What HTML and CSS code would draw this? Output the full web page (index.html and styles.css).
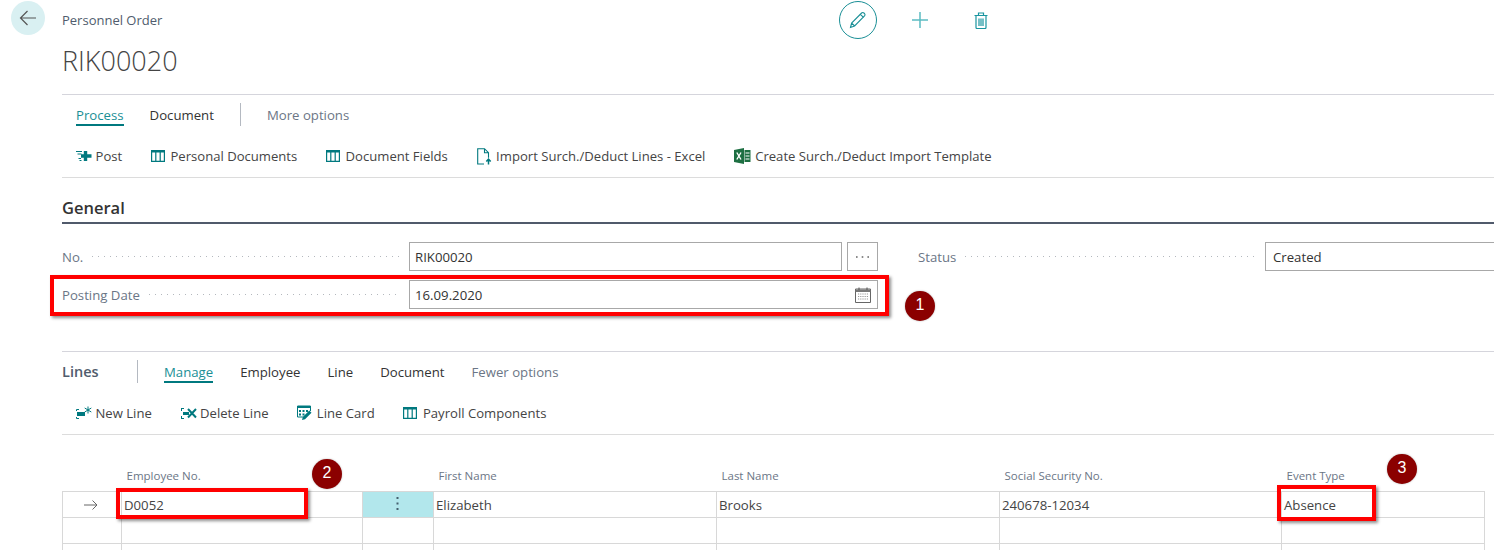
FILE: index.html
```html
<!DOCTYPE html>
<html lang="en">
<head>
    <meta charset="UTF-8">
    <title>Personnel Order</title>
    <link rel="stylesheet" href="styles.css">
</head>
<body>
    <div class="page">
        <!-- Back button -->
        <div class="back-col">
            <button class="back-btn">
                <svg width="18" height="16" viewBox="0 0 18 16"><path d="M17 8H1.500M8.500 1 1.500 8l7 7" fill="none" stroke="#555" stroke-width="1.200"/></svg>
            </button>
        </div>

        <div class="main">
            <!-- Title and card actions -->
            <header class="header">
                <div class="title-block">
                    <div class="caption">Personnel Order</div>
                    <h1 class="title">RIK00020</h1>
                </div>
                <div class="card-actions">
                    <button class="edit-btn">
                        <svg width="18" height="18" viewBox="0 0 18 18"><path d="M1.500 16.500 2.600 12 12.600 2a1.600 1.600 0 0 1 2.300 0l.6.6a1.600 1.600 0 0 1 0 2.300L5.600 15zM2.600 12 5.600 15M11.400 3.300l3.300 3.300" fill="none" stroke="#1a8f96" stroke-width="1.100"/></svg>
                    </button>
                    <button class="icon-btn">
                        <svg width="16" height="16" viewBox="0 0 16 16"><path d="M8 0v16M0 8h16" stroke="#5cbcc2" stroke-width="1.500"/></svg>
                    </button>
                    <button class="icon-btn trash">
                        <svg width="14" height="17" viewBox="0 0 14 17"><path d="M2 4v11.500a1 1 0 0 0 1 1h8a1 1 0 0 0 1-1V4M.5 3.500h13M4.500 3.500V1h5v2.500M5 6.500v7.500M7 6.500v7.500M9 6.500v7.500" fill="none" stroke="#1a95a0" stroke-width="1.200"/></svg>
                    </button>
                </div>
            </header>

            <!-- Page action bar -->
            <section class="action-bar">
                <nav class="tabs">
                    <a class="tab active">Process</a>
                    <a class="tab">Document</a>
                    <span class="tab-divider"></span>
                    <a class="tab muted">More options</a>
                </nav>
                <div class="commands">
                    <a class="command">
                        <span class="command-icon"><svg width="16" height="13" viewBox="0 0 16 13"><path d="M9.500 1v10M5 6h10.500" stroke="#00797f" stroke-width="3.400"/><path d="M0 1.500h6M1.500 4h4M2.500 8.500h2.500M3.500 10.500h2" stroke="#00797f" stroke-width="1"/></svg></span>Post
                    </a>
                    <a class="command">
                        <span class="command-icon"><svg width="14" height="12" viewBox="0 0 14 12"><use href="#grid"/></svg></span>Personal Documents
                    </a>
                    <a class="command">
                        <span class="command-icon"><svg width="14" height="12" viewBox="0 0 14 12"><use href="#grid"/></svg></span>Document Fields
                    </a>
                    <a class="command">
                        <span class="command-icon"><svg width="15" height="17" viewBox="0 0 15 17"><path d="M7 16H.7V.7h6.800l4 4v5M7.500.7v4h4" fill="none" stroke="#00797f" stroke-width="1.100"/><path d="M11.500 16.500v-5M9.300 13.600l2.200-2.400 2.200 2.400" fill="none" stroke="#00797f" stroke-width="1.500"/></svg></span>Import Surch./Deduct Lines - Excel
                    </a>
                    <a class="command">
                        <span class="command-icon wide"><svg width="17" height="16" viewBox="0 0 17 16"><path d="M0 2 10 0v16L0 14z" fill="#1d6f42"/><path d="M10.500 2H16.500V14H10.500z" fill="#1d6f42"/><path d="M2.800 4.500 7 11.500M7 4.500 2.800 11.500" stroke="#fff" stroke-width="1.400"/><path d="M11.500 5h4M11.500 8h4M11.500 11h4" stroke="#fff" stroke-width="1.200"/></svg></span>Create Surch./Deduct Import Template
                    </a>
                </div>
            </section>

            <!-- General group -->
            <section>
                <h2 class="group-title">General</h2>
                <div class="fields">
                    <div class="field">
                        <label class="field-label">No.<span class="leader"></span></label>
                        <div class="field-box">RIK00020</div>
                        <button class="lookup-btn">
                            <svg width="13" height="2" viewBox="0 0 13 2"><path d="M0 .3h1.600v1.500H0zM5.700 .3h1.600v1.500H5.700zM11.400 .3H13v1.500h-1.600z" fill="#666"/></svg>
                        </button>
                    </div>
                    <div class="field">
                        <label class="field-label">Status<span class="leader"></span></label>
                        <div class="field-box bleed">Created</div>
                    </div>
                    <div class="field">
                        <label class="field-label">Posting Date<span class="leader"></span></label>
                        <div class="field-box date">
                            16.09.2020
                            <svg width="16" height="16" viewBox="0 0 16 16"><path d="M.5 2h15v13.500H.5z" fill="none" stroke="#666"/><path d="M.5 2.500h15V5H.5z" fill="#777"/><path d="M4 .5v2.500M12 .5v2.500" stroke="#555"/><path d="M3 7h10M3 9.500h10M3 12h10" stroke="#999" stroke-dasharray="1.200 1"/></svg>
                        </div>
                    </div>
                </div>
            </section>

            <!-- Lines part -->
            <section class="lines">
                <nav class="tabs">
                    <span class="lines-title">Lines</span>
                    <span class="tab-divider"></span>
                    <a class="tab active">Manage</a>
                    <a class="tab">Employee</a>
                    <a class="tab">Line</a>
                    <a class="tab">Document</a>
                    <a class="tab muted">Fewer options</a>
                </nav>
                <div class="commands">
                    <a class="command">
                        <span class="command-icon"><svg width="16" height="14" viewBox="0 0 16 14"><path d="M1 6h8v4H1z" fill="#00797f"/><path d="M.5 5V3.500H3M.5 11v1.500H3" fill="none" stroke="#00797f"/><path d="M12 .5v7M8.700 2l6.600 4M15.300 2l-6.600 4" stroke="#00797f"/></svg></span>New Line
                    </a>
                    <a class="command">
                        <span class="command-icon"><svg width="16" height="13" viewBox="0 0 16 13"><path d="M2 5h6v3H2z" fill="#00797f"/><path d="M0 1.500h3M0 11.500h3M.5 11V9M.5 2v2" stroke="#00797f"/><path d="M7 2l8 8.500M15 2l-8 8.500" stroke="#00797f" stroke-width="2"/></svg></span>Delete Line
                    </a>
                    <a class="command">
                        <span class="command-icon"><svg width="16" height="16" viewBox="0 0 16 16"><path d="M.5.500h13V3H.5z" fill="#00797f"/><path d="M.5 1v11h6M13.500 1v5" fill="none" stroke="#00797f"/><path d="M2 5h2v2H2zM5.500 5h2v2h-2zM9 5h2v2H9zM2 8.500h2v2H2zM5.500 8.500h2v2h-2z" fill="#00797f"/><path d="M5 15l.8-3 6.500-6.500 2.200 2.200L8 14.200z" fill="#00797f"/></svg></span>Line Card
                    </a>
                    <a class="command">
                        <span class="command-icon"><svg width="14" height="12" viewBox="0 0 14 12"><use href="#grid"/></svg></span>Payroll Components
                    </a>
                </div>
            </section>

            <!-- Lines table -->
            <table class="grid-table">
                <colgroup>
                    <col class="col-arrow"><col class="col-emp"><col class="col-menu">
                    <col class="col-wide"><col class="col-wide"><col class="col-ssn"><col class="col-event">
                </colgroup>
                <thead>
                    <tr>
                        <th></th><th>Employee No.</th><th></th><th>First Name</th><th>Last Name</th><th>Social Security No.</th><th>Event Type</th>
                    </tr>
                </thead>
                <tbody>
                    <tr>
                        <td class="arrow-cell"><svg width="14" height="10" viewBox="0 0 14 10"><path d="M0 5h13M8.500.5 13 5 8.500 9.500" fill="none" stroke="#666"/></svg></td>
                        <td>D0052</td>
                        <td class="menu-cell"><svg width="3" height="13" viewBox="0 0 3 13"><path d="M.5 0h2v2h-2zM.5 5.500h2v2h-2zM.5 11h2v2h-2z" fill="#45606e"/></svg></td>
                        <td>Elizabeth</td><td>Brooks</td><td>240678-12034</td><td>Absence</td>
                    </tr>
                    <tr><td></td><td></td><td></td><td></td><td></td><td></td><td></td></tr>
                    <tr><td></td><td></td><td></td><td></td><td></td><td></td><td></td></tr>
                </tbody>
            </table>
        </div>

        <!-- Red annotation frames and numbers -->
        <div class="mark mark-date"></div>
        <div class="mark mark-emp"></div>
        <div class="mark mark-event"></div>
        <div class="badge badge-1">1</div>
        <div class="badge badge-2">2</div>
        <div class="badge badge-3">3</div>
    </div>

    <!-- Shared column icon -->
    <svg class="defs" width="0" height="0">
        <symbol id="grid" viewBox="0 0 14 12"><path d="M.6.600h12.800v10.800H.6z" fill="none" stroke="#00797f" stroke-width="1.200"/><path d="M.6 1.500h12.800" stroke="#00797f" stroke-width="2"/><path d="M4.800 2v9M9.200 2v9" stroke="#00797f" stroke-width="1.200"/></symbol>
    </svg>
</body>
</html>
```

FILE: styles.css
```css
/* Page */
body {
    margin: 0;
    background-color: #fff;
    color: #333;
    font-family: "Open Sans", "Noto Sans", sans-serif;
    font-size: 13.2px;
}

button {
    padding: 0;
    border: none;
    background: none;
    font: inherit;
}

.page {
    position: relative;
    display: flex;
    height: 550px;
    overflow: hidden;
}

.defs {
    position: absolute;
}

/* Back button */
.back-col {
    flex: 0 0 62px;
    padding: 1px 0 0 11px;
    box-sizing: border-box;
}

.back-btn {
    display: flex;
    align-items: center;
    justify-content: center;
    width: 34px;
    height: 34px;
    border-radius: 50%;
    background-color: #d9f0f2;
}

.main {
    flex: 1;
    min-width: 0;
}

/* Header */
.header {
    display: flex;
    height: 94px;
}

.title-block {
    flex: 0 0 777px;
}

.caption {
    padding-top: 11px;
    line-height: 18px;
    color: #505c6d;
    font-size: 13px;
}

.title {
    margin: 12px 0 0;
    line-height: 40px;
    color: #444;
    font-size: 27px;
    font-weight: 300;
}

.card-actions {
    display: flex;
    gap: 24px;
    align-items: center;
    height: 40px;
}

.edit-btn {
    display: flex;
    align-items: center;
    justify-content: center;
    width: 38px;
    height: 38px;
    box-sizing: border-box;
    border: 1px solid #1a8f96;
    border-radius: 50%;
}

.icon-btn {
    display: flex;
    align-items: center;
    justify-content: center;
    width: 38px;
    height: 38px;
}

.icon-btn.trash {
    margin-left: -1px;
}

/* Action bars */
.action-bar {
    border-top: 1px solid #d5d5dc;
    border-bottom: 1px solid #dcdcdc;
}

.tabs {
    display: flex;
    gap: 26px;
    align-items: flex-start;
    height: 32px;
    padding: 8px 0 0 14px;
    box-sizing: border-box;
}

.tab {
    height: 23px;
    padding-top: 3px;
    box-sizing: border-box;
    line-height: 18px;
    color: #333;
}

.tab.active {
    border-bottom: 2px solid #00797f;
    color: #1a8f96;
}

.tab.muted {
    color: #6b7686;
}

.tab-divider {
    width: 1px;
    height: 23px;
    background-color: #b4b9c1;
}

.commands {
    display: flex;
    gap: 28.8px;
    align-items: center;
    height: 30px;
    margin-top: 14px;
    padding: 0 0 6px 14px;
    box-sizing: content-box;
    font-size: 13.1px;
}

.command {
    display: flex;
    align-items: center;
    color: #444;
    white-space: nowrap;
}

.command-icon {
    display: flex;
    align-items: center;
    width: 19.5px;
}

.command-icon.wide {
    width: 21px;
}

/* General group */
.group-title {
    height: 24px;
    margin: 0;
    padding-top: 20px;
    border-bottom: 2px solid #505a6b;
    line-height: 20px;
    color: #333;
    font-size: 16.5px;
    font-weight: 600;
}

.fields {
    display: grid;
    grid-template-columns: 816px 1fr;
    column-gap: 40px;
    row-gap: 9px;
    margin-top: 18px;
    margin-right: -10px;
}

.field {
    display: flex;
}

.field-label {
    display: flex;
    flex: 0 0 338px;
    align-items: center;
    margin-right: 9px;
    color: #6b7686;
    white-space: nowrap;
}

.leader {
    flex: 1;
    height: 1px;
    margin-left: 9px;
    background-image: linear-gradient(to right, #b4b8be 1px, transparent 1px);
    background-size: 6px 1px;
}

.field-box {
    display: flex;
    flex: 1;
    align-items: center;
    justify-content: space-between;
    height: 29px;
    padding: 0 6px 0 5px;
    box-sizing: border-box;
    border: 1px solid #a8a8a8;
    color: #333;
}

.field-box.bleed {
    padding-left: 7px;
}

.lookup-btn {
    display: flex;
    flex: 0 0 31px;
    align-items: center;
    justify-content: center;
    height: 29px;
    margin-left: 5px;
    box-sizing: border-box;
    border: 1px solid #a8a8a8;
}

/* Lines part */
.lines {
    margin-top: 42px;
    border-top: 1px solid #d5d5dc;
    border-bottom: 1px solid #dcdcdc;
}

.lines .tabs {
    gap: 27px;
    padding-left: 0;
}

.lines .tab-divider {
    margin-right: -1px;
}

.lines-title {
    width: 48px;
    padding-top: 2px;
    line-height: 19px;
    color: #505c6d;
    font-size: 14.5px;
    font-weight: 600;
}

/* Lines table */
.grid-table {
    width: 1423px;
    margin-top: 27px;
    border-collapse: collapse;
    table-layout: fixed;
}

.col-arrow { width: 59px; }
.col-emp { width: 241px; }
.col-menu { width: 71px; }
.col-wide { width: 283px; }
.col-ssn { width: 282px; }
.col-event { width: 203px; }

.grid-table th {
    height: 29px;
    padding: 0 0 2px 5px;
    box-sizing: border-box;
    color: #6b7686;
    font-size: 11.5px;
    font-weight: 400;
    text-align: left;
}

.grid-table td {
    height: 26px;
    padding: 1px 0 0 2px;
    box-sizing: border-box;
    border: 1px solid #d8d8d8;
    color: #444;
}

.grid-table .arrow-cell {
    padding-left: 0;
    padding-right: 3px;
    text-align: center;
}

.grid-table .menu-cell {
    padding-left: 0;
    padding-right: 1px;
    background-color: #b2e7ec;
    text-align: center;
}

/* Annotations */
.mark {
    position: absolute;
    box-sizing: border-box;
    border: 4px solid #f00;
    box-shadow: 2px 2px 3px rgba(0, 0, 0, 0.45);
}

.mark-date {
    left: 50px;
    top: 275px;
    width: 839px;
    height: 41px;
}

.mark-emp {
    left: 116px;
    top: 488px;
    width: 192px;
    height: 31px;
}

.mark-event {
    left: 1277px;
    top: 485px;
    width: 99px;
    height: 36px;
}

.badge {
    position: absolute;
    width: 30px;
    height: 30px;
    border-radius: 50%;
    background-color: #8b0000;
    box-shadow: 0 0 2px rgba(0, 0, 0, 0.3);
    color: #fff;
    font-family: "Liberation Sans", sans-serif;
    font-size: 16px;
    line-height: 28px;
    text-align: center;
}

.badge-1 {
    left: 905px;
    top: 291px;
}

.badge-2 {
    left: 312px;
    top: 459px;
}

.badge-3 {
    left: 1387px;
    top: 454px;
}
```
